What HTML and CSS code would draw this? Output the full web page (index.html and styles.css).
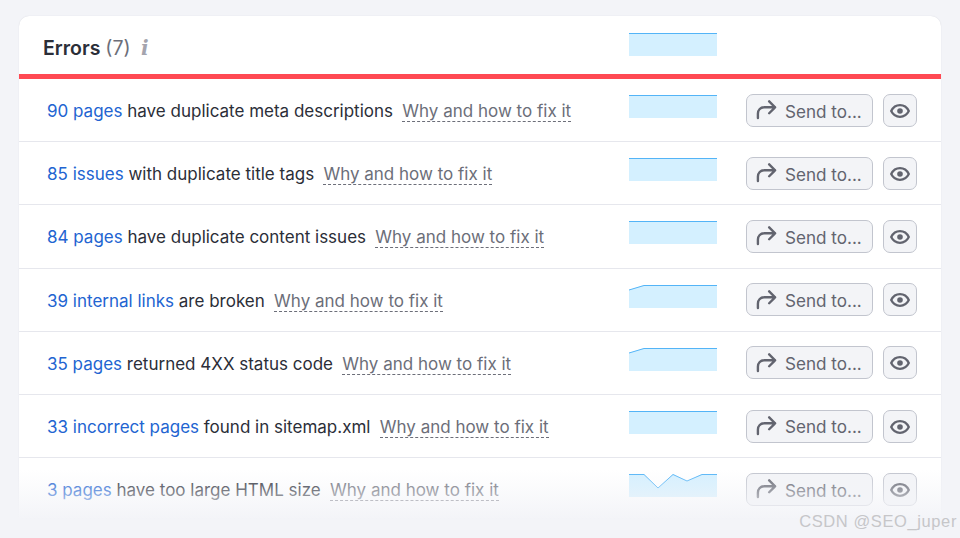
FILE: index.html
```html
<!DOCTYPE html>
<html lang="en">
<head>
<meta charset="utf-8">
<title>Errors</title>
<link rel="stylesheet" href="styles.css">
</head>
<body>
<svg class="defs" width="0" height="0" aria-hidden="true">
  <symbol id="send" viewBox="0 0 22 22"><path d="M2 20v-4.500c0-4.200 2.700-6.800 6.800-6.800H20M13.800 2.500l6.200 6.200-6.200 6.200" fill="none" stroke="currentColor" stroke-width="2.500" stroke-linecap="round" stroke-linejoin="round"/></symbol>
  <symbol id="eye" viewBox="0 0 20 14"><path d="M1.200 7C3 3.400 6.200 1.200 10 1.200S17 3.400 18.800 7C17 10.600 13.800 12.800 10 12.800S3 10.600 1.200 7Z" fill="none" stroke="currentColor" stroke-width="2.300" stroke-linejoin="round"/><circle cx="10" cy="7" r="2.800" fill="currentColor"/></symbol>
</svg>
<main class="card">
  <header class="head">
    <h1 class="title">Errors <span class="count">(7)</span></h1>
    <span class="info">i</span>
    <svg class="spark" viewBox="0 0 88 24"><path class="area" d="M0 1H88V24H0Z"/><path class="line" d="M0 1.500H88"/></svg>
  </header>
  <section class="rows">
    <div class="row">
      <p class="msg"><a class="lnk">90 pages</a> have duplicate meta descriptions <a class="why">Why and how to fix it</a></p>
      <svg class="spark" viewBox="0 0 88 24"><path class="area" d="M0 1H88V24H0Z"/><path class="line" d="M0 1.500H88"/></svg>
      <button class="send"><svg class="ic-send"><use href="#send"/></svg>Send to...</button>
      <button class="view"><svg class="ic-eye"><use href="#eye"/></svg></button>
    </div>
    <div class="row">
      <p class="msg"><a class="lnk">85 issues</a> with duplicate title tags <a class="why">Why and how to fix it</a></p>
      <svg class="spark" viewBox="0 0 88 24"><path class="area" d="M0 1H88V24H0Z"/><path class="line" d="M0 1.500H88"/></svg>
      <button class="send"><svg class="ic-send"><use href="#send"/></svg>Send to...</button>
      <button class="view"><svg class="ic-eye"><use href="#eye"/></svg></button>
    </div>
    <div class="row">
      <p class="msg"><a class="lnk">84 pages</a> have duplicate content issues <a class="why">Why and how to fix it</a></p>
      <svg class="spark" viewBox="0 0 88 24"><path class="area" d="M0 1H88V24H0Z"/><path class="line" d="M0 1.500H88"/></svg>
      <button class="send"><svg class="ic-send"><use href="#send"/></svg>Send to...</button>
      <button class="view"><svg class="ic-eye"><use href="#eye"/></svg></button>
    </div>
    <div class="row">
      <p class="msg"><a class="lnk">39 internal links</a> are broken <a class="why">Why and how to fix it</a></p>
      <svg class="spark" viewBox="0 0 88 24"><path class="area" d="M0 6L15 1H88V24H0Z"/><path class="line" d="M0 6L15 1.500H88"/></svg>
      <button class="send"><svg class="ic-send"><use href="#send"/></svg>Send to...</button>
      <button class="view"><svg class="ic-eye"><use href="#eye"/></svg></button>
    </div>
    <div class="row">
      <p class="msg"><a class="lnk">35 pages</a> returned 4XX status code <a class="why">Why and how to fix it</a></p>
      <svg class="spark" viewBox="0 0 88 24"><path class="area" d="M0 6L15 1H88V24H0Z"/><path class="line" d="M0 6L15 1.500H88"/></svg>
      <button class="send"><svg class="ic-send"><use href="#send"/></svg>Send to...</button>
      <button class="view"><svg class="ic-eye"><use href="#eye"/></svg></button>
    </div>
    <div class="row">
      <p class="msg"><a class="lnk">33 incorrect pages</a> found in sitemap.xml <a class="why">Why and how to fix it</a></p>
      <svg class="spark" viewBox="0 0 88 24"><path class="area" d="M0 1H88V24H0Z"/><path class="line" d="M0 1.500H88"/></svg>
      <button class="send"><svg class="ic-send"><use href="#send"/></svg>Send to...</button>
      <button class="view"><svg class="ic-eye"><use href="#eye"/></svg></button>
    </div>
    <div class="row">
      <p class="msg"><a class="lnk">3 pages</a> have too large HTML size <a class="why">Why and how to fix it</a></p>
      <svg class="spark" viewBox="0 0 88 24"><path class="area" d="M0 1H15L29 15L44 1L58 8L73 1H88V24H0Z"/><path class="line" d="M0 1.500H15L29 15L44 1.500L58 8L73 1.500H88"/></svg>
      <button class="send"><svg class="ic-send"><use href="#send"/></svg>Send to...</button>
      <button class="view"><svg class="ic-eye"><use href="#eye"/></svg></button>
    </div>
  </section>
</main>
<div class="fade"></div>
<div class="mark">CSDN @SEO_juper</div>
</body>
</html>
```
FILE: styles.css
```css
* { box-sizing: border-box; }
html, body { height: 100%; }
body {
  margin: 0;
  height: 538px;
  overflow: hidden;
  background: #f3f4f8;
  padding: 16px 19px 0;
  font-family: Inter, "Liberation Sans", sans-serif;
  color: #2b2e38;
  position: relative;
}
.defs { position: absolute; }
.card {
  width: 922px;
  height: 502px;
  background: #fff;
  border-radius: 10px 10px 0 0;
  overflow: hidden;
  box-shadow: 0 0 1px rgba(90, 95, 120, .25);
}
.head {
  height: 58px;
  display: flex;
  align-items: center;
  padding: 6px 0 0 24px;
}
.title {
  margin: 0;
  font-size: 19.500px;
  line-height: 24px;
  font-weight: 600;
  width: 97px;
  white-space: nowrap;
}
.count { font-weight: 400; color: #6c6e79; }
.info {
  font-family: "DejaVu Serif", serif;
  font-style: italic;
  font-weight: 700;
  font-size: 20px;
  color: #a4a4ae;
  width: 489px;
  padding-left: 1px;
}
.head .spark { margin-bottom: 8px; }
.rows { border-top: 5px solid #ff4953; }
.row {
  height: 63.2px;
  display: flex;
  align-items: center;
  padding-left: 28px;
  border-bottom: 1.5px solid #e6e7ed;
}
.msg {
  margin: 0;
  padding-top: 2px;
  width: 582px;
  font-size: 17px;
  line-height: 24px;
  white-space: nowrap;
}
.lnk { color: #2264d1; }
.why {
  margin-left: 4.500px;
  color: #6c6e79;
  border-bottom: 1.5px dashed #6c6e79;
  padding-bottom: 0;
}
.spark { width: 88px; height: 24px; flex: none; margin: 0 29px 8px 0; display: block; }
.area { fill: #d4f0ff; }
.line { fill: none; stroke: #53b4f7; stroke-width: 1; }
.send, .view {
  height: 33px;
  flex: none;
  border: 1.5px solid #c2c5ce;
  border-radius: 7px;
  background: #f3f4f7;
  color: #62646f;
  font: 400 17.100px/1 Inter, "Liberation Sans", sans-serif;
  display: flex;
  align-items: center;
  padding: 1px 0 0;
}
.send { width: 127px; padding: 2px 0 0 9px; gap: 8px; white-space: nowrap; }
.view { width: 34px; margin-left: 10px; justify-content: center; }
.ic-send { width: 21px; height: 21px; margin-top: -3px; }
.ic-eye { width: 20px; height: 14px; }
.fade {
  position: absolute;
  left: 0;
  right: 0;
  top: 470px;
  height: 50px;
  background: linear-gradient(to bottom, rgba(243,244,248,0) 0%, rgba(243,244,248,.38) 40%, rgba(243,244,248,.75) 75%, #f3f4f8 100%);
}
.mark {
  position: absolute;
  right: 3px;
  top: 511px;
  font-family: "Liberation Sans", sans-serif;
  font-size: 16.500px;
  line-height: 20px;
  letter-spacing: .6px;
  color: #c6c6c9;
}
```
